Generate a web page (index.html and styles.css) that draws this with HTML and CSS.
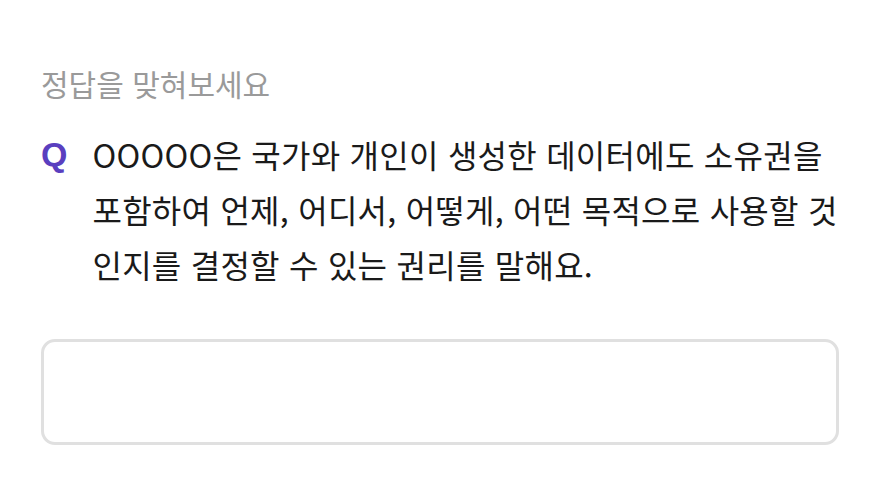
FILE: index.html
```html
<!DOCTYPE html>
<html lang="ko">
<head>
<meta charset="utf-8">
<link rel="stylesheet" href="styles.css">
</head>
<body>
<main class="quiz">
  <p class="hint">정답을 맞혀보세요</p>
  <div class="question">
    <span class="q-mark">Q</span>
    <p class="q-text">OOOOO은 국가와 개인이 생성한 데이터에도 소유권을 포함하여 언제, 어디서, 어떻게, 어떤 목적으로 사용할 것인지를 결정할 수 있는 권리를 말해요.</p>
  </div>
  <div class="answer-box"></div>
</main>
</body>
</html>
```
FILE: styles.css
```css
html, body {
  margin: 0;
  padding: 0;
  background: #ffffff;
}
body {
  font-family: "Noto Sans CJK KR", "Noto Sans", sans-serif;
}
.quiz {
  padding: 63px 41px 0 41px;
}
.hint {
  margin: 0;
  font-size: 30px;
  line-height: 40px;
  color: #9a9a9a;
}
.question {
  display: flex;
  margin-top: 24px;
  gap: 25px;
}
.q-mark {
  font-family: "Liberation Sans", Arial, sans-serif;
  font-weight: bold;
  font-size: 34px;
  color: #5a3fbf;
  line-height: 55px;
  flex: none;
}
.q-text {
  margin: 0;
  width: 765px;
  font-size: 32px;
  font-weight: 400;
  letter-spacing: 0.25px;
  line-height: 55px;
  color: #1a1a1a;
  word-break: normal;
}
.answer-box {
  margin-top: 47px;
  height: 100px;
  width: 792px;
  border: 3px solid #e0e0e0;
  border-radius: 14px;
}
```
